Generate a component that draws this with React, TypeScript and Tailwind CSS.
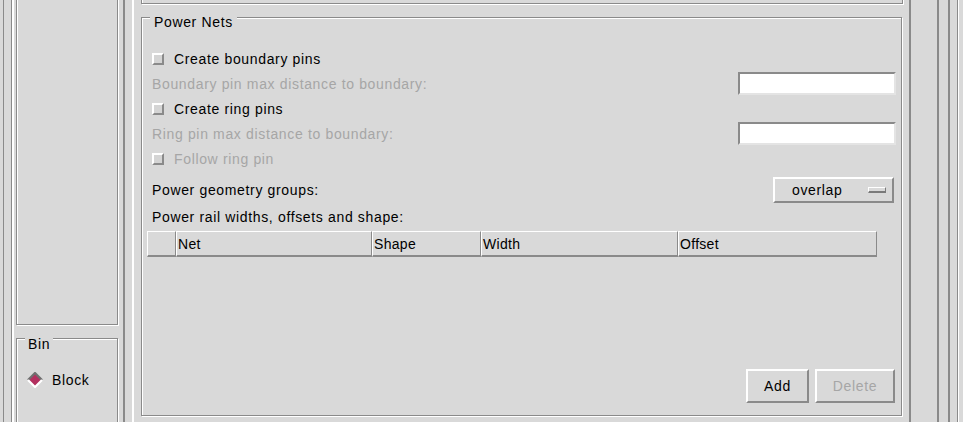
const dark = "border-[#8a8a8a]";

function Check({ label, disabled }: { label: string; disabled?: boolean }) {
  return (
    <div className="flex h-[25px] items-center pl-[5px]">
      <span className="h-[12px] w-[12px] border-2 border-t-white border-l-white border-r-[#8a8a8a] border-b-[#8a8a8a] bg-[#d4d4d4]" />
      <span className={`ml-[10px] ${disabled ? "text-[#a6a6a6]" : "text-black"}`}>{label}</span>
    </div>
  );
}

function FieldRow({ label }: { label: string }) {
  return (
    <div className="flex h-[25px] items-center justify-between pl-[5px]">
      <span className="text-[#a6a6a6]">{label}</span>
      <div className="h-[23px] w-[158px] border-2 border-t-[#8a8a8a] border-l-[#8a8a8a] border-r-[#e4e4e4] border-b-[#e4e4e4] bg-white" />
    </div>
  );
}

function GroupTitle({ text, left, top }: { text: string; left: string; top: string }) {
  return <span className={`absolute ${left} ${top} bg-[#d9d9d9] px-[4px]`}>{text}</span>;
}

const columns = [
  { name: "", w: "w-[29px]" },
  { name: "Net", w: "w-[196px]" },
  { name: "Shape", w: "w-[109px]" },
  { name: "Width", w: "w-[197px]" },
  { name: "Offset", w: "w-[199px]" },
];

export default function App() {
  return (
    <div className="flex h-[422px] w-[963px] overflow-hidden bg-[#d9d9d9] font-['Liberation_Sans',Arial,sans-serif] text-[14px] leading-[16px] tracking-[0.65px] text-black">
      {/* edge of the pane on the far left */}
      <div className={`w-[4px] shrink-0 border-r ${dark}`} />
      <div className={`ml-[7px] w-px shrink-0 bg-[#8a8a8a]`} />

      {/* left pane */}
      <div className="flex w-[113px] shrink-0 flex-col border-l-2 border-r-2 border-l-white border-r-[#8a8a8a] px-[2px]">
        <div className={`-mt-[10px] h-[335px] w-[102px] shrink-0 border ${dark} shadow-[inset_1px_1px_0_#fff,1px_1px_0_#fff]`} />
        <div className={`relative mt-[13px] h-[120px] w-[102px] shrink-0 border ${dark} shadow-[inset_1px_1px_0_#fff,1px_1px_0_#fff]`}>
          <span className="absolute left-[8px] top-[-3px] bg-[#d9d9d9] px-[3px]">Bin</span>
          <div className="flex h-[16px] items-center pl-[10px] mt-[33px]">
            <svg width="16" height="16" viewBox="0 0 16 16" className="shrink-0">
              <polygon points="8,1 15,8 8,15 1,8" fill="#b3305f" />
              <polyline points="1,8 8,1 15,8" fill="none" stroke="#6f6f6f" strokeWidth="2.2" />
              <polyline points="1,8 8,15 15,8" fill="none" stroke="#ffffff" strokeWidth="2.2" />
            </svg>
            <span className="ml-[9px]">Block</span>
          </div>
        </div>
      </div>

      {/* main pane */}
      <div className="ml-[7px] flex w-[779px] shrink-0 flex-col border-l-2 border-r-2 border-l-white border-r-[#8a8a8a] pl-[7px] pr-[5px]">
        <div className={`-mt-[10px] h-[14px] w-[762px] shrink-0 border ${dark} shadow-[inset_1px_1px_0_#fff,1px_1px_0_#fff]`} />

        <div className={`relative mt-[13px] flex h-[399px] w-[761px] shrink-0 flex-col border ${dark} px-[5px] pt-[28px] pb-[12px] shadow-[inset_1px_1px_0_#fff,1px_1px_0_#fff]`}>
          <GroupTitle text="Power Nets" left="left-[8px]" top="top-[-4px]" />

          <Check label="Create boundary pins" />
          <FieldRow label="Boundary pin max distance to boundary:" />
          <Check label="Create ring pins" />
          <FieldRow label="Ring pin max distance to boundary:" />
          <Check label="Follow ring pin" disabled />

          <div className="mt-[6px] flex h-[26px] items-center justify-between pl-[5px]">
            <span>Power geometry groups:</span>
            <div className="mr-[2px] flex h-[26px] w-[121px] items-center justify-between border-2 border-t-white border-l-white border-r-[#8a8a8a] border-b-[#8a8a8a] pl-[17px] pr-[6px]">
              <span>overlap</span>
              <span className="h-[6px] w-[18px] border border-t-white border-l-white border-r-[#7a7a7a] border-b-[#7a7a7a] border-b-2" />
            </div>
          </div>

          <div className="flex h-[28px] items-center pl-[5px]">Power rail widths, offsets and shape:</div>

          <div className="flex h-[26px] w-[730px]">
            {columns.map((c) => (
              <div
                key={c.name || "sel"}
                className={`${c.w} flex items-center border-t border-l border-r border-b-2 border-t-white border-l-white border-r-[#8a8a8a] border-b-[#8a8a8a] pl-[1px] tracking-[0.3px]`}
              >
                {c.name}
              </div>
            ))}
          </div>

          <div className="flex-1" />

          <div className="mr-[1px] flex justify-end gap-[6px]">
            <button className="h-[34px] w-[63px] border-2 border-t-white border-l-white border-r-[#8a8a8a] border-b-[#8a8a8a] text-black">
              Add
            </button>
            <button className="h-[34px] w-[80px] border-2 border-t-white border-l-white border-r-[#8a8a8a] border-b-[#8a8a8a] text-[#a6a6a6]">
              Delete
            </button>
          </div>
        </div>
      </div>

      {/* panes on the right edge */}
      <div className="w-[28px] shrink-0 border-r-2 border-[#8a8a8a]" />
      <div className="w-[11px] shrink-0 border-r-2 border-[#8a8a8a]" />
      <div className="w-[8px] shrink-0 border-r border-[#8a8a8a]" />
      <div className="flex-1 border-l border-white" />
    </div>
  );
}
